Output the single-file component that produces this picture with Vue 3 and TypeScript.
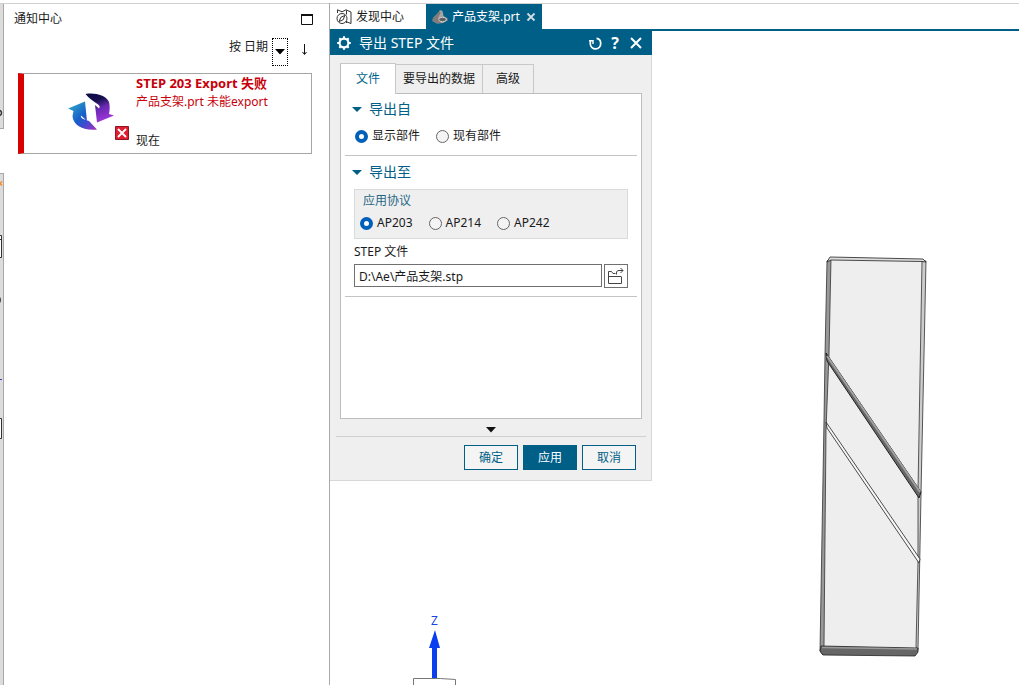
<script setup lang="ts">
import { ref } from 'vue'

const source = ref('display')
const protocol = ref('AP203')
const filePath = ref('D:\\Ae\\产品支架.stp')
const activeTab = ref('文件')

const tabs = ['文件', '要导出的数据', '高级']
const sources = [
  { value: 'display', label: '显示部件' },
  { value: 'existing', label: '现有部件' },
]
const protocols = ['AP203', 'AP214', 'AP242']
</script>

<template>
  <div class="app">
    <div class="rail" aria-hidden="true">
      <div class="rail-top">
        <svg width="3" height="124" viewBox="0 0 3 124"><circle cx="-1" cy="109" r="2.5" fill="none" stroke="#333" stroke-width="1.5" /></svg>
      </div>
      <div class="rail-main">
        <svg width="3" height="280" viewBox="0 0 3 280">
          <path d="M2 7.500L0 9.500l2 2" fill="none" stroke="#f58a1f" stroke-width="1.5" />
          <path d="M0 62h1v21H0z" fill="#fff" />
          <path d="M0 61.500h1.500v22H0M0 65.500h1.500" fill="none" stroke="#333" />
          <circle cx="-3" cy="126" r="4" fill="#444" />
          <path d="M0 205.500h2" stroke="#3344aa" />
          <path d="M0 244h1v20H0z" fill="#fff" />
          <path d="M0 244.500h1.500v20H0" fill="none" stroke="#333" />
        </svg>
      </div>
    </div>

    <aside class="notices">
      <header class="notices-head">
        <span>通知中心</span>
        <button class="plain" aria-label="最大化">
          <svg width="13" height="11" viewBox="0 0 13 11"><path d="M.5 1v9.500h11V1" fill="none" stroke="#111" /><path d="M0 1h12" stroke="#111" stroke-width="2" /></svg>
        </button>
      </header>
      <div class="sort">
        <span>按 日期</span>
        <button class="sort-drop" aria-label="排序依据">
          <svg width="10" height="6" viewBox="0 0 10 6"><path d="M0 0h10L5 5.500z" fill="#000" /></svg>
        </button>
        <button class="plain sort-dir" aria-label="降序">
          <svg width="5" height="11" viewBox="0 0 5 11"><path d="M2.500 0v10M.5 8l2 2.500L4.500 8" fill="none" stroke="#111" /></svg>
        </button>
      </div>
      <article class="card">
        <svg class="card-logo" width="62" height="48" viewBox="68 93 62 48" aria-hidden="true">
          <defs>
            <linearGradient id="blueArc" x1="0" y1="0" x2="1" y2="1">
              <stop offset="0" stop-color="#36b3c8" /><stop offset=".5" stop-color="#155fc9" /><stop offset=".7" stop-color="#4149cf" /><stop offset="1" stop-color="#ad30ba" />
            </linearGradient>
            <linearGradient id="violetArc" x1="0" y1="0" x2=".4" y2="1">
              <stop offset="0" stop-color="#0b0c45" /><stop offset=".35" stop-color="#17104f" /><stop offset=".6" stop-color="#6729b0" /><stop offset="1" stop-color="#9b35d5" />
            </linearGradient>
          </defs>
          <path d="M68 108.500L85 101.500L87 121L81 115.500C80 118 84 119.500 89 121L97 129.500C83 131 73 125 72.500 116L73.500 111z" fill="url(#blueArc)" />
          <path d="M85.500 94C96 92.500 105 95.500 108.500 101C110 104 110 109 109 114L114 115.500L97 122.500L95 105L99 108.500C102 104 94 104 85.500 94z" fill="url(#violetArc)" />
          <path d="M115.500 126.500h13v13h-13z" fill="#e01e30" stroke="#8d1524" />
          <path d="M118 129l8 8m0-8l-8 8" stroke="#fff" stroke-width="1.800" />
        </svg>
        <div class="card-text">
          <strong>STEP 203 Export 失败</strong>
          <p>产品支架.prt 未能export</p>
          <time>现在</time>
        </div>
      </article>
    </aside>

    <main class="workspace">
      <nav class="docs">
        <button class="doc">
          <svg width="16" height="16" viewBox="0 0 16 16" fill="none" stroke="#333">
            <path d="M1.500 4V.8l4.500 2 4-2 5 2.200v11.500l-4-1.500M10.500 1.500v4M10.500 12v2" />
            <circle cx="6" cy="9.500" r="5" /><path d="M8.800 6.500L7.200 10.700 3.200 12.500l1.600-4.200z" />
          </svg>
          <span>发现中心</span>
        </button>
        <div class="doc doc-open">
          <svg width="16" height="14" viewBox="0 0 16 14">
            <path d="M1 8l5-5 2-3 2.500 1 1 5 4 2.500v2L11 13 5 13.500.5 11z" fill="#a9a5a3" />
            <path d="M1 8l5-5 2-2 .5 2L6 8l3 5-4 .5L.5 11z" fill="#817c7a" />
            <ellipse cx="10.500" cy="9.500" rx="3.800" ry="2.200" fill="#5f5d5e" stroke="#ddd" stroke-width=".8" />
          </svg>
          <span>产品支架.prt</span>
          <button class="plain" aria-label="关闭标签">
            <svg width="10" height="10" viewBox="0 0 10 10"><path d="M1.500 1.500l7 7m0-7l-7 7" stroke="#d5dde2" stroke-width="1.800" /></svg>
          </button>
        </div>
      </nav>

      <div class="viewport">
        <svg class="part" width="120" height="410" viewBox="815 250 120 410" aria-hidden="true">
          <path d="M830 257L923 259L926 262L920 562L918 653L915 656L823 655L820 651L825 355L827 261z" fill="#eee" />
          <path d="M827 261L831 258L829 354L826 430L824 646L823 655L820 651L824 420L825 355z" fill="#999" stroke="#333" stroke-width=".8" />
          <path d="M922 261L926 261L921 494L918 650L916 647L918 562L918 490z" fill="#ccc" stroke="#333" stroke-width=".8" />
          <path d="M830 257L923 259L926 262L922 261.500L831 260L827 262z" fill="#ddd" stroke="#222" stroke-width=".8" />
          <path d="M821 646L918 648L918 652L915 656L823 655L820 651z" fill="#666" stroke="#222" stroke-width=".8" />
          <path d="M822 647.500L917 649" stroke="#999" stroke-width="1.500" />
          <path d="M826 353L921 492L919 498L827 361z" fill="#666" stroke="#222" />
          <path d="M827 356L920 492" stroke="#a2a2a2" stroke-width="2" />
          <path d="M826 422L920 559L919 563L827 428z" fill="#f6f6f6" stroke="#222" stroke-width=".8" />
        </svg>
        <svg class="axis" width="44" height="75" viewBox="413 610 44 75" role="img" aria-label="Z">
          <text x="431" y="625" font-size="12" fill="#1944e0">Z</text>
          <path d="M435 630l5 18h-3v30h-5v-30h-3z" fill="#0b3ef0" />
          <path d="M413.500 685v-6.500h27l15 1v5.500" fill="none" stroke="#777" />
        </svg>

        <section class="dialog" role="dialog" aria-labelledby="dialog-title">
          <header class="dialog-head">
            <svg width="14" height="14" viewBox="0 0 14 14" aria-hidden="true">
              <circle cx="7" cy="7" r="4.400" fill="none" stroke="#fff" stroke-width="2.200" />
              <path d="M7 .2v2M7 11.800v2M.2 7h2M11.800 7h2M2.300 2.300l1.500 1.500M10.200 10.200l1.500 1.500M11.700 2.300l-1.500 1.500M3.800 10.200l-1.500 1.500" stroke="#fff" stroke-width="2" />
            </svg>
            <h1 id="dialog-title">导出 STEP 文件</h1>
            <button class="plain reset" aria-label="重置">
              <svg width="13" height="13" viewBox="0 0 13 13" fill="none" stroke="#fff" stroke-width="1.700"><path d="M7.500 1.300C10 1.600 11.700 3.800 11.700 6.500a5.200 5.200 0 0 1-10.400.5V4" /><path d="M0 3.800h4v3.200" stroke-width="1.400" /></svg>
            </button>
            <button class="plain help" aria-label="帮助">?</button>
            <button class="plain" aria-label="关闭">
              <svg width="12" height="12" viewBox="0 0 12 12"><path d="M1 1l10 10m0-10L1 11" stroke="#fff" stroke-width="2" /></svg>
            </button>
          </header>

          <div class="dialog-body">
            <div class="tabs" role="tablist">
              <button v-for="t in tabs" :key="t" role="tab" class="tab" :class="{ active: t === activeTab }" :aria-selected="t === activeTab" @click="activeTab = t">{{ t }}</button>
            </div>
            <div class="panel">
              <h2><i class="caret"></i>导出自</h2>
              <div class="radios source" role="radiogroup" aria-label="导出自">
                <label v-for="s in sources" :key="s.value"><input v-model="source" type="radio" name="source" :value="s.value" />{{ s.label }}</label>
              </div>
              <hr />
              <h2 class="second"><i class="caret"></i>导出至</h2>
              <div class="group" role="radiogroup" aria-labelledby="protocol-title">
                <div id="protocol-title" class="group-title">应用协议</div>
                <div class="radios">
                  <label v-for="p in protocols" :key="p"><input v-model="protocol" type="radio" name="protocol" :value="p" />{{ p }}</label>
                </div>
              </div>
              <label class="file-label" for="step-file">STEP 文件</label>
              <div class="file">
                <input id="step-file" v-model="filePath" type="text" />
                <button class="browse" aria-label="浏览">
                  <svg width="18" height="18" viewBox="0 0 18 18" fill="none" stroke="#444">
                    <path d="M1.500 16.500v-12h3l1.500 2h2.500M14.500 10v6.500h-13M1.500 9.500h13" /><path d="M9.500 7.500V6c0-2 1-2.500 2.500-2.500h4M13.500 1L16 3.500 13.500 6" />
                  </svg>
                </button>
              </div>
              <hr />
            </div>
            <button class="plain more" aria-label="更多">
              <svg width="10" height="6" viewBox="0 0 10 6"><path d="M0 0h10L5 5.500z" fill="#111" /></svg>
            </button>
            <footer class="actions">
              <button>确定</button>
              <button class="primary">应用</button>
              <button>取消</button>
            </footer>
          </div>
        </section>
      </div>
    </main>
  </div>
</template>

<style>
body {
  margin: 0;
  background: #fff;
}
</style>

<style scoped>
* {
  box-sizing: border-box;
}
.app {
  display: flex;
  min-height: 100vh;
  padding-top: 3px;
  overflow: hidden;
  color: #1a1a1a;
  font: 12px/20px "Noto Sans", "Noto Sans CJK SC", sans-serif;
  background: linear-gradient(#d0d0d0, #d0d0d0) 0 3px / 100% 1px no-repeat #fff;
}
button,
input {
  font: inherit;
  color: inherit;
}
button {
  white-space: nowrap;
}
svg {
  display: block;
  flex: none;
}
.plain {
  display: flex;
  align-items: center;
  justify-content: center;
  padding: 0;
  border: 0;
  background: none;
}
.rail {
  display: flex;
  flex-direction: column;
  gap: 44px;
  width: 4px;
  flex: none;
  padding-top: 1px;
}
.rail-top,
.rail-main {
  background: #dcdcdc;
  border: solid #a8a8a8;
  border-width: 0 1px 1px 0;
}
.rail-main {
  flex: 1;
  border-width: 1px 1px 0 0;
}
.notices {
  width: 326px;
  flex: none;
  padding-top: 1px;
  border-right: 1px solid #aaa;
}
.notices-head {
  display: flex;
  align-items: center;
  justify-content: space-between;
  height: 30px;
  padding: 0 15px 0 10px;
}
.sort {
  display: flex;
  align-items: flex-start;
  justify-content: flex-end;
  gap: 4px;
  padding: 4px 21px 0 0;
  line-height: 18px;
}
.sort-drop {
  display: flex;
  align-items: center;
  justify-content: center;
  width: 16px;
  height: 28px;
  padding: 0;
  border: 1px dotted #000;
  background: #fff;
}
.sort-dir {
  width: 8px;
  height: 23px;
  margin-left: 8px;
}
.card {
  display: flex;
  align-items: flex-start;
  gap: 6px;
  margin: 7px 17px 0 14px;
  border: 1px solid #a6a6a6;
  border-left: 6px solid #d90000;
  padding-left: 44px;
  line-height: 18px;
}
.card-logo {
  margin-top: 19px;
}
.card-text {
  display: flex;
  flex-direction: column;
  padding-bottom: 3px;
}
.card strong,
.card p {
  margin: 0;
  color: #c8000a;
}
.card strong {
  font-size: 13px;
}
.card p {
  line-height: 20px;
}
.card time {
  margin-top: 20px;
}
.workspace {
  display: flex;
  flex: 1;
  flex-direction: column;
  min-width: 0;
}
.docs {
  display: flex;
  height: 28px;
  padding-top: 1px;
  border-bottom: 2px solid #005f87;
}
.doc {
  display: flex;
  align-items: center;
  gap: 4px;
  width: 96px;
  padding: 0 6px;
  border: 0;
  background: none;
}
.doc-open {
  width: 116px;
  color: #fff;
  background: #005f87;
}
.doc-open .plain {
  margin-left: auto;
}
.viewport {
  position: relative;
  flex: 1;
}
.part {
  position: absolute;
  left: 485px;
  top: 219px;
}
.axis {
  position: absolute;
  left: 83px;
  bottom: 0;
}
.dialog {
  position: relative;
  width: 322px;
  border: solid #d8d8d8;
  border-width: 0 1px 1px 0;
  background: #efefef;
}
.dialog-head {
  display: flex;
  align-items: center;
  gap: 8px;
  height: 24px;
  margin-right: -1px;
  padding: 0 10px 0 7px;
  color: #fff;
  background: #005f87;
}
.dialog-head h1 {
  flex: 1;
  margin: 0;
  font-size: 14px;
  font-weight: 400;
}
.help {
  width: 10px;
  margin-right: 2px;
  font-size: 16px;
  font-weight: 700;
}
.dialog-body {
  padding: 8px 5px 10px 6px;
}
.tabs {
  display: flex;
  align-items: flex-end;
  margin: 0 4px;
}
.tab {
  height: 29px;
  padding: 0 13px;
  border: 1px solid #c8c8c8;
  border-left: 0;
  border-bottom: 0;
  background: #efefef;
}
.tab:nth-child(2) {
  padding: 0 7px;
}
.tab.active {
  position: relative;
  height: 31px;
  margin-bottom: -1px;
  padding: 0 15px;
  border-left: 1px solid #bdbdbd;
  color: #00668c;
  background: #fff;
}
.panel {
  min-height: 326px;
  margin: 0 4px;
  padding: 5px 4px;
  border: 1px solid #bdbdbd;
  background: #fff;
}
.panel h2 {
  display: flex;
  align-items: center;
  gap: 7px;
  margin: 0 0 0 7px;
  color: #005f87;
  font-size: 14px;
  font-weight: 400;
}
.panel h2.second {
  margin-top: 6px;
}
.caret {
  border: 5px solid transparent;
  border-top-color: #005f87;
  border-bottom: 0;
}
.radios {
  display: flex;
  gap: 16px;
}
.radios.source {
  margin: 7px 0 0 10px;
}
.radios label {
  display: flex;
  align-items: center;
  gap: 4px;
}
.radios input {
  appearance: none;
  width: 13px;
  height: 13px;
  margin: 0;
  border: 1px solid #666;
  border-radius: 50%;
  background: #f4f4f4;
}
.radios input:checked {
  border: 4px solid #005fb8;
  background: #fff;
}
.panel hr {
  height: 1px;
  margin: 9px 0 0;
  border: 0;
  background: #c4c4c4;
}
.panel .file + hr {
  margin-top: 8px;
}
.group {
  margin: 7px 9px 0;
  padding: 1px 5px 5px;
  border: 1px solid #d8dcd8;
  background: #efefef;
}
.group-title {
  margin: 0 0 2px 3px;
  color: #1f6684;
}
.file-label {
  display: block;
  margin: 3px 9px 2px;
}
.file {
  display: flex;
  gap: 2px;
  margin: 0 9px;
}
.file input {
  flex: 1;
  min-width: 0;
  height: 23px;
  padding: 0 4px;
  border: 1px solid #707070;
  background: #fff;
}
.browse {
  display: flex;
  align-items: center;
  justify-content: center;
  width: 24px;
  height: 24px;
  padding: 0;
  border: 1px solid #707070;
  background: #fff;
}
.more {
  width: 100%;
  height: 17px;
  padding-top: 4px;
}
.actions {
  display: flex;
  justify-content: flex-end;
  gap: 5px;
  padding: 8px 10px 0 0;
  border-top: 1px solid #d0d0d0;
}
.actions button {
  width: 54px;
  height: 25px;
  padding: 0;
  border: 1px solid #005f87;
  color: #005f87;
  background: #f4f4f4;
}
.actions .primary {
  color: #fff;
  background: #005f87;
}
</style>
